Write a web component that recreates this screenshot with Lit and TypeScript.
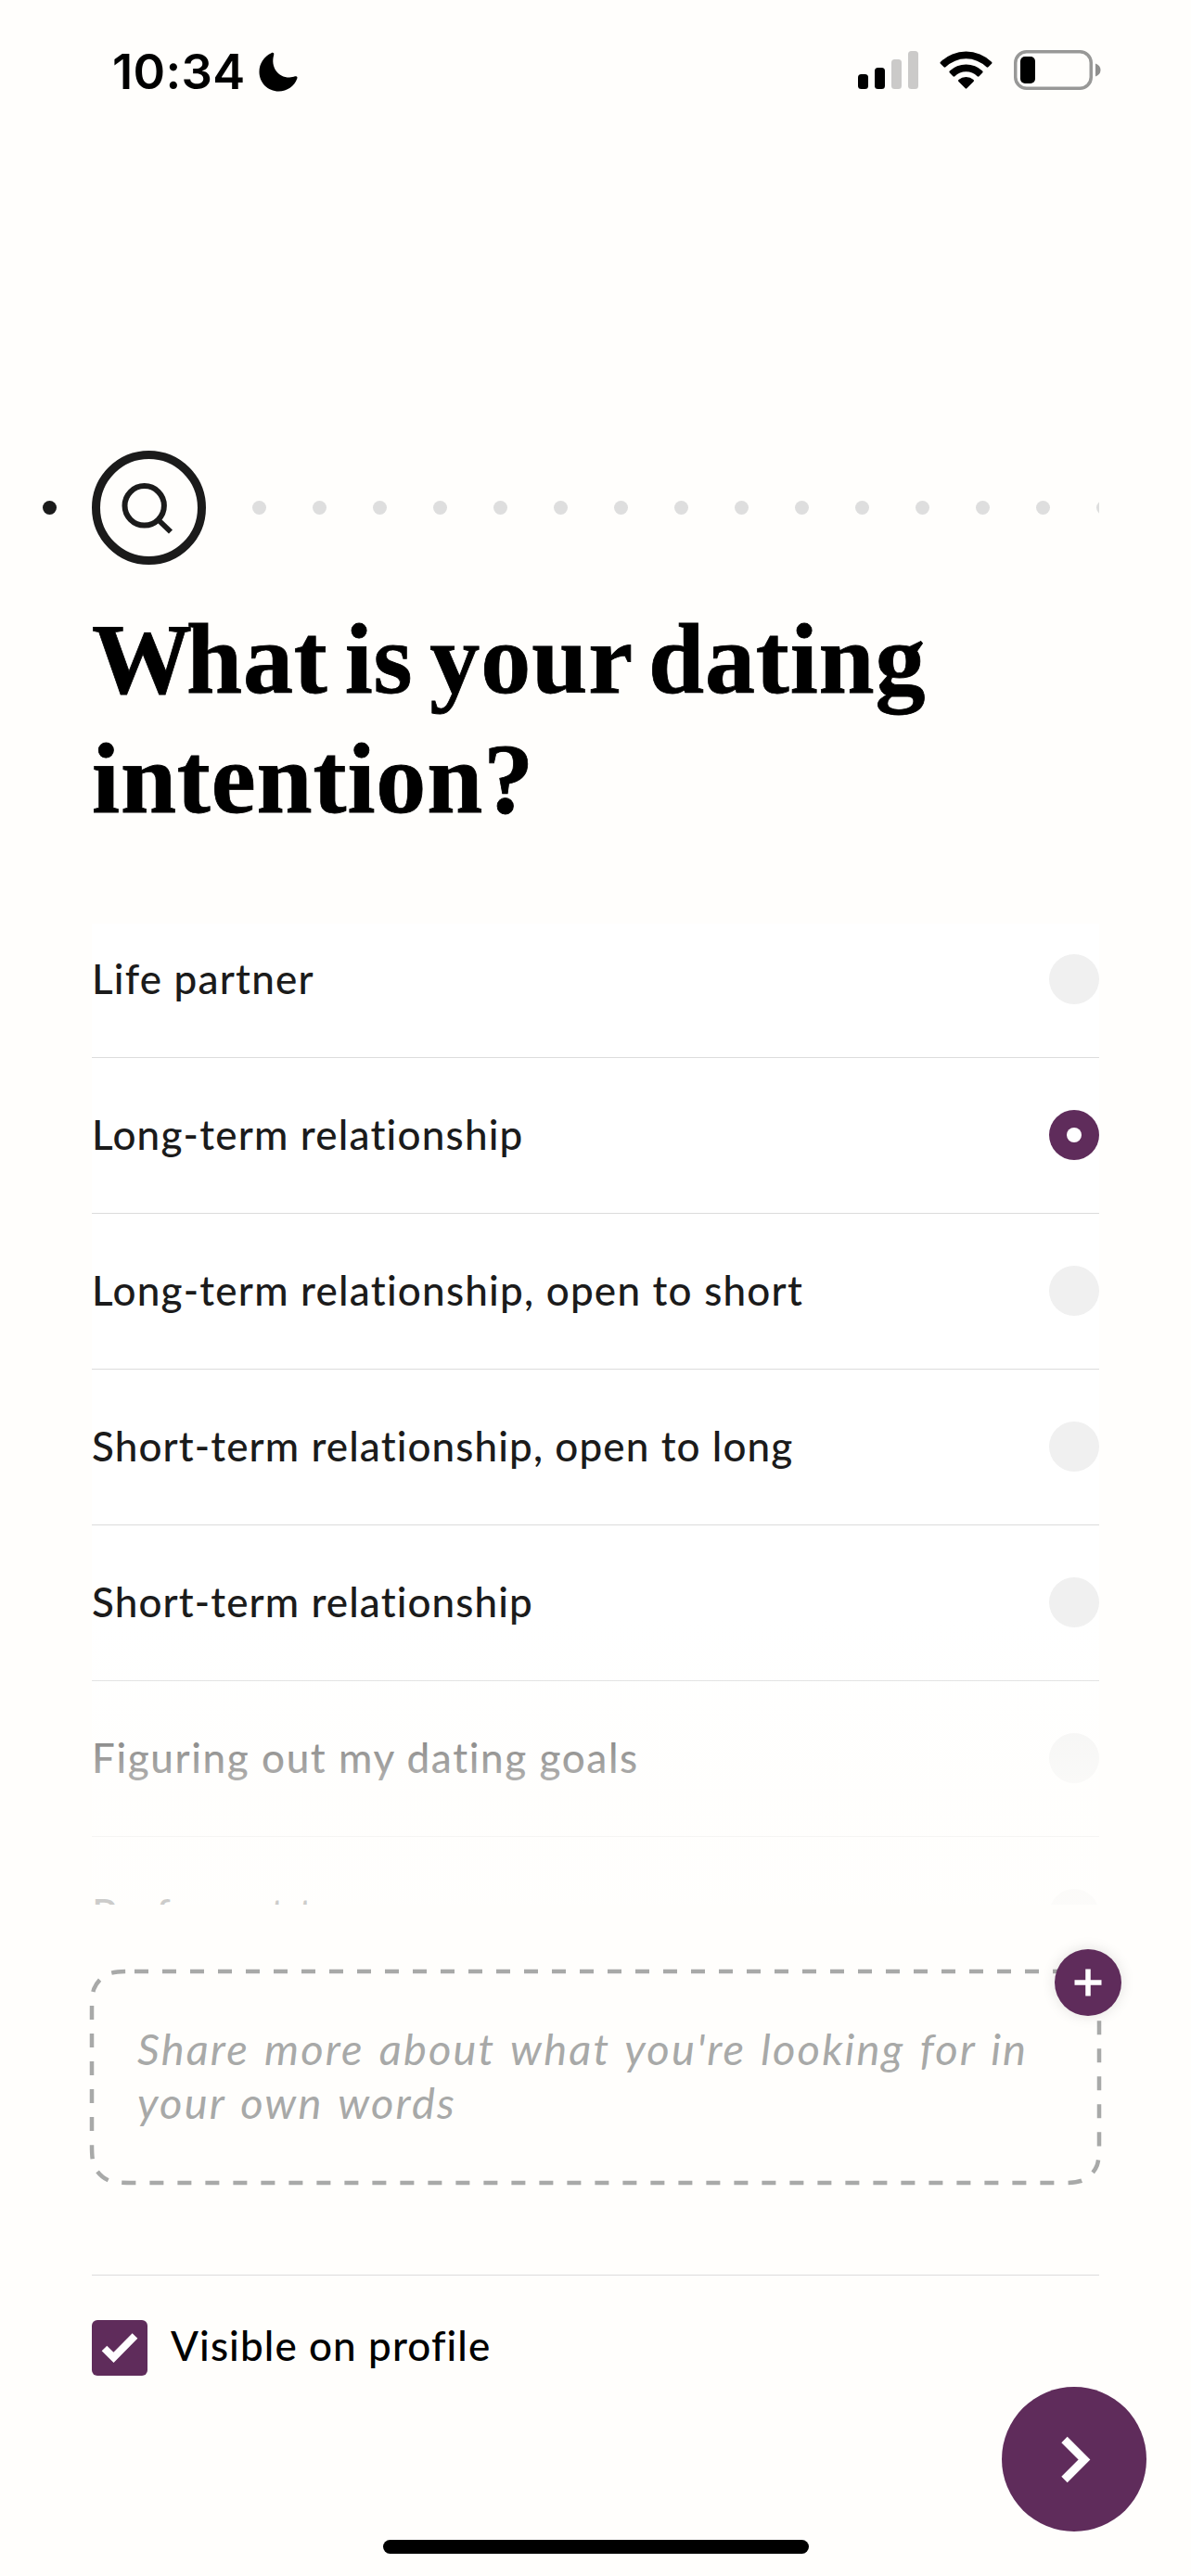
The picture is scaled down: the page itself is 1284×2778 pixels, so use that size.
import { LitElement, html, css } from "lit";
import { customElement, property, state } from "lit/decorators.js";
import { classMap } from "lit/directives/class-map.js";
import { styleMap } from "lit/directives/style-map.js";

@customElement("status-bar")
export class StatusBar extends LitElement {
  static styles = css`
    :host {
      display: flex;
      justify-content: space-between;
      align-items: flex-start;
      height: 486px;
      padding: 0 97px 0 121px;
      box-sizing: border-box;
    }
    .left,
    .right {
      display: flex;
      align-items: center;
      height: 154px;
    }
    .right {
      height: 151px;
    }
    .time {
      font: 600 52.5px/60px Inter, "Liberation Sans", sans-serif;
      color: #000;
      letter-spacing: 0.3px;
    }
    .moon {
      margin-left: 15px;
    }
    .wifi {
      margin: 0 23px;
    }
    svg {
      display: block;
    }
  `;
  render() {
    return html`
      <div class="left">
        <span class="time">10:34</span>
        <svg class="moon" width="42" height="43" viewBox="0 0 42 43">
          <path d="M13.5 1.2C15.2.3 16.8 1.2 16.2 3.2C12.5 16 20.5 27.5 33 27.5C35.4 27.5 37.3 26.8 39 26.3C41 25.7 42 26.7 41.3 28.7C38.3 37 30.5 42.5 21.5 42.5C9.8 42.5 .5 33.2 .5 21.5C.5 12.5 5.5 5 13.5 1.2Z" />
        </svg>
      </div>
      <div class="right">
        <svg width="65" height="43" viewBox="0 0 65 43">
          <rect x="0" y="26" width="11" height="16" rx="3.5" />
          <rect x="18" y="19" width="11" height="23" rx="3.5" />
          <rect x="36" y="10" width="11" height="32" rx="3.5" fill="#cbcac9" />
          <rect x="54" y="1" width="11" height="41" rx="3.5" fill="#cbcac9" />
        </svg>
        <svg class="wifi" width="57" height="43" viewBox="0 0 58 43">
          <path d="M1 12.6a40 40 0 0 1 56 0q1 1 0 2l-3.6 3.6q-1 1-2 0a32.2 32.2 0 0 0-44.8 0q-1 1-2 0L1 14.6q-1-1 0-2z" />
          <path d="M11 22.6a26 26 0 0 1 36 0q1 1 0 2l-3.700 3.700q-1 1-2 0a17.900 17.900 0 0 0-24.600 0q-1 1-2 0L11 24.600q-1-1 0-2z" />
          <path d="M20.8 32.2a12.500 12.500 0 0 1 16.400 0q1 1 0 2l-7.400 7.500q-.8.8-1.6 0l-7.400-7.500q-1-1 0-2z" />
        </svg>
        <svg width="94" height="43" viewBox="0 0 94 43">
          <rect x="1.750" y="1.750" width="81.500" height="39.500" rx="12" fill="none" stroke="#989897" stroke-width="3.500" />
          <rect x="7" y="7" width="16" height="29" rx="5" />
          <path d="M88 14.500q5.500 2 5.500 7t-5.500 7z" fill="#8f8f8e" />
        </svg>
      </div>
    `;
  }
}

@customElement("step-progress")
export class StepProgress extends LitElement {
  @property({ type: Number }) remaining = 15;
  static styles = css`
    :host {
      display: flex;
      align-items: center;
      height: 123px;
      width: 1139px;
      padding-left: 46px;
      overflow: hidden;
      box-sizing: content-box;
    }
    .dot {
      flex: none;
      width: 15px;
      height: 15px;
      border-radius: 50%;
      background: #dedede;
    }
    .done {
      background: #1b1b1b;
    }
    .current {
      flex: none;
      width: 105px;
      height: 105px;
      margin: 0 50px 0 38px;
      border: 9px solid #1b1b1b;
      border-radius: 50%;
    }
    .rest {
      display: flex;
      gap: 50px;
    }
    svg {
      display: block;
    }
  `;
  render() {
    return html`
      <span class="dot done"></span>
      <div class="current">
        <svg width="105" height="105" viewBox="0 0 105 105" fill="none" stroke="#1b1b1b">
          <circle cx="47.700" cy="50.300" r="21.200" stroke-width="6" />
          <path d="M63.500 66.500L76 78.500" stroke-width="5.800" />
        </svg>
      </div>
      <div class="rest">
        ${Array.from({ length: this.remaining }, () => html`<span class="dot"></span>`)}
      </div>
    `;
  }
}

@customElement("option-row")
export class OptionRow extends LitElement {
  @property() label = "";
  @property({ type: Number }) tracking = 1.2;
  @property({ type: Boolean }) checked = false;
  static styles = css`
    :host {
      display: flex;
      justify-content: space-between;
      align-items: center;
      height: 168px;
      padding-bottom: 1px;
      box-sizing: border-box;
      border-bottom: 1px solid #dcdcdc;
    }
    .label {
      padding-bottom: 3px;
      font: 500 44px/54px Lato, "Liberation Sans", sans-serif;
      font-variant-ligatures: none;
      color: #1b1b1b;
      white-space: nowrap;
    }
    .radio {
      display: flex;
      align-items: center;
      justify-content: center;
      width: 54px;
      height: 54px;
      border-radius: 50%;
      background: #f0f0f0;
    }
    .checked {
      background: #5f2c5b;
    }
    .checked::after {
      content: "";
      width: 16px;
      height: 16px;
      border-radius: 50%;
      background: #fff;
    }
  `;
  render() {
    return html`
      <span class="label" style=${styleMap({ letterSpacing: `${this.tracking}px` })}>${this.label}</span>
      <span class=${classMap({ radio: true, checked: this.checked })}></span>
    `;
  }
}

@customElement("note-box")
export class NoteBox extends LitElement {
  static styles = css`
    :host {
      display: block;
      position: relative;
      width: 1086px;
      height: 228px;
      box-sizing: border-box;
      padding: 54px 49px;
    }
    .frame {
      position: absolute;
      left: -3px;
      top: -3px;
    }
    .text {
      font: italic 400 47px/58px Lato, "Liberation Sans", sans-serif;
      font-variant-ligatures: none;
      letter-spacing: 2.15px;
      word-spacing: 3px;
      color: #a8a9a8;
      white-space: nowrap;
    }
    .add {
      position: absolute;
      right: -24px;
      top: -24px;
      width: 72px;
      height: 72px;
      border-radius: 50%;
      background: #5f2c5b;
      box-shadow: 0 0 15px rgba(0, 0, 0, 0.12);
    }
    svg {
      display: block;
    }
  `;
  render() {
    return html`
      <svg class="frame" width="1092" height="234" viewBox="-3 -3 1092 234" fill="none">
        <path
          d="M46 0H1040C1053.400 0 1060 0 1067.060 2.250A30 30 0 0 1 1083.750 18.940C1086 26 1086 32.600 1086 46V182C1086 195.400 1086 202 1083.750 209.060A30 30 0 0 1 1067.060 225.750C1060 228 1053.400 228 1040 228H46C32.600 228 26 228 18.940 225.750A30 30 0 0 1 2.250 209.060C0 202 0 195.400 0 182V46C0 32.600 0 26 2.250 18.940A30 30 0 0 1 18.940 2.250C26 0 32.600 0 46 0"
          stroke="#a8a9a8"
          stroke-width="4.500"
          stroke-dasharray="15 15"
        />
      </svg>
      <div class="text">Share more about what you're looking for in<br />your own words</div>
      <div class="add">
        <svg width="72" height="72" viewBox="0 0 72 72" stroke="#fff" stroke-width="5.500">
          <path d="M21.500 36h29M36 21.500v29" />
        </svg>
      </div>
    `;
  }
}

@customElement("app-root")
export class AppRoot extends LitElement {
  @state() private selected = 1;
  private options = [
    { label: "Life partner", tracking: 1.2 },
    { label: "Long-term relationship", tracking: 1.2 },
    { label: "Long-term relationship, open to short", tracking: 1.22 },
    { label: "Short-term relationship, open to long", tracking: 1.1 },
    { label: "Short-term relationship", tracking: 1.1 },
    { label: "Figuring out my dating goals", tracking: 1.6 },
    { label: "Prefer not to say", tracking: 1.6 },
  ];
  static styles = css`
    :host {
      display: block;
      position: relative;
      width: 1284px;
      height: 2778px;
      overflow: hidden;
      background: #fffefc;
    }
    h1 {
      margin: 37px 0 0 99px;
      height: 327px;
      font: bold 108px/129px "Liberation Serif", serif;
      letter-spacing: 0.9px;
      word-spacing: -10px;
      -webkit-text-stroke: 0.8px #000;
      color: #000;
      white-space: nowrap;
    }
    .initial {
      letter-spacing: -6px;
    }
    .list {
      position: relative;
      width: 1086px;
      height: 1081px;
      margin-left: 99px;
      overflow: hidden;
      background: linear-gradient(#fffefc 23px, #fff 23px);
    }
    .list::after {
      content: "";
      position: absolute;
      left: 0;
      right: 0;
      bottom: 0;
      height: 314px;
      pointer-events: none;
      background: linear-gradient(
        rgba(255, 254, 252, 0),
        rgba(255, 254, 252, 0.22) 72px,
        rgba(255, 254, 252, 0.51) 140px,
        rgba(255, 254, 252, 0.66) 181px,
        rgba(255, 254, 252, 0.72) 240px,
        rgba(255, 254, 252, 0.78)
      );
    }
    note-box {
      margin: 72px 0 0 99px;
    }
    .visible {
      display: flex;
      gap: 25px;
      width: 1086px;
      height: 109px;
      margin: 99px 0 0 99px;
      padding-top: 48px;
      box-sizing: border-box;
      border-top: 1px solid #dcdcdc;
    }
    .box {
      width: 60px;
      height: 60px;
      border-radius: 6px;
      background: #5f2c5b;
    }
    .visible-label {
      font: 500 44px/54px Lato, "Liberation Sans", sans-serif;
      font-variant-ligatures: none;
      letter-spacing: 1.1px;
      color: #000;
    }
    .next {
      position: absolute;
      left: 1080px;
      top: 2574px;
      width: 156px;
      height: 156px;
      border-radius: 50%;
      background: #5f2c5b;
    }
    .home {
      position: absolute;
      left: 413px;
      top: 2739px;
      width: 459px;
      height: 15px;
      border-radius: 8px;
      background: #000;
    }
    svg {
      display: block;
    }
  `;
  render() {
    return html`
      <status-bar></status-bar>
      <step-progress></step-progress>
      <h1><span class="initial">W</span>hat is your dating<br />intention?</h1>
      <div class="list">
        ${this.options.map(
          (o, i) => html`<option-row
            .label=${o.label}
            .tracking=${o.tracking}
            .checked=${i === this.selected}
            @click=${() => (this.selected = i)}
          ></option-row>`
        )}
      </div>
      <note-box></note-box>
      <div class="visible">
        <div class="box">
          <svg width="60" height="60" viewBox="0 0 60 60" fill="none" stroke="#fff" stroke-width="8">
            <path d="M13.500 30.500L23.500 40.300L46.500 17" />
          </svg>
        </div>
        <span class="visible-label">Visible on profile</span>
      </div>
      <div class="next">
        <svg width="156" height="156" viewBox="0 0 156 156" fill="none" stroke="#fff" stroke-width="9">
          <path d="M67.500 57L89 78.500L67.500 100" />
        </svg>
      </div>
      <div class="home"></div>
    `;
  }
}
